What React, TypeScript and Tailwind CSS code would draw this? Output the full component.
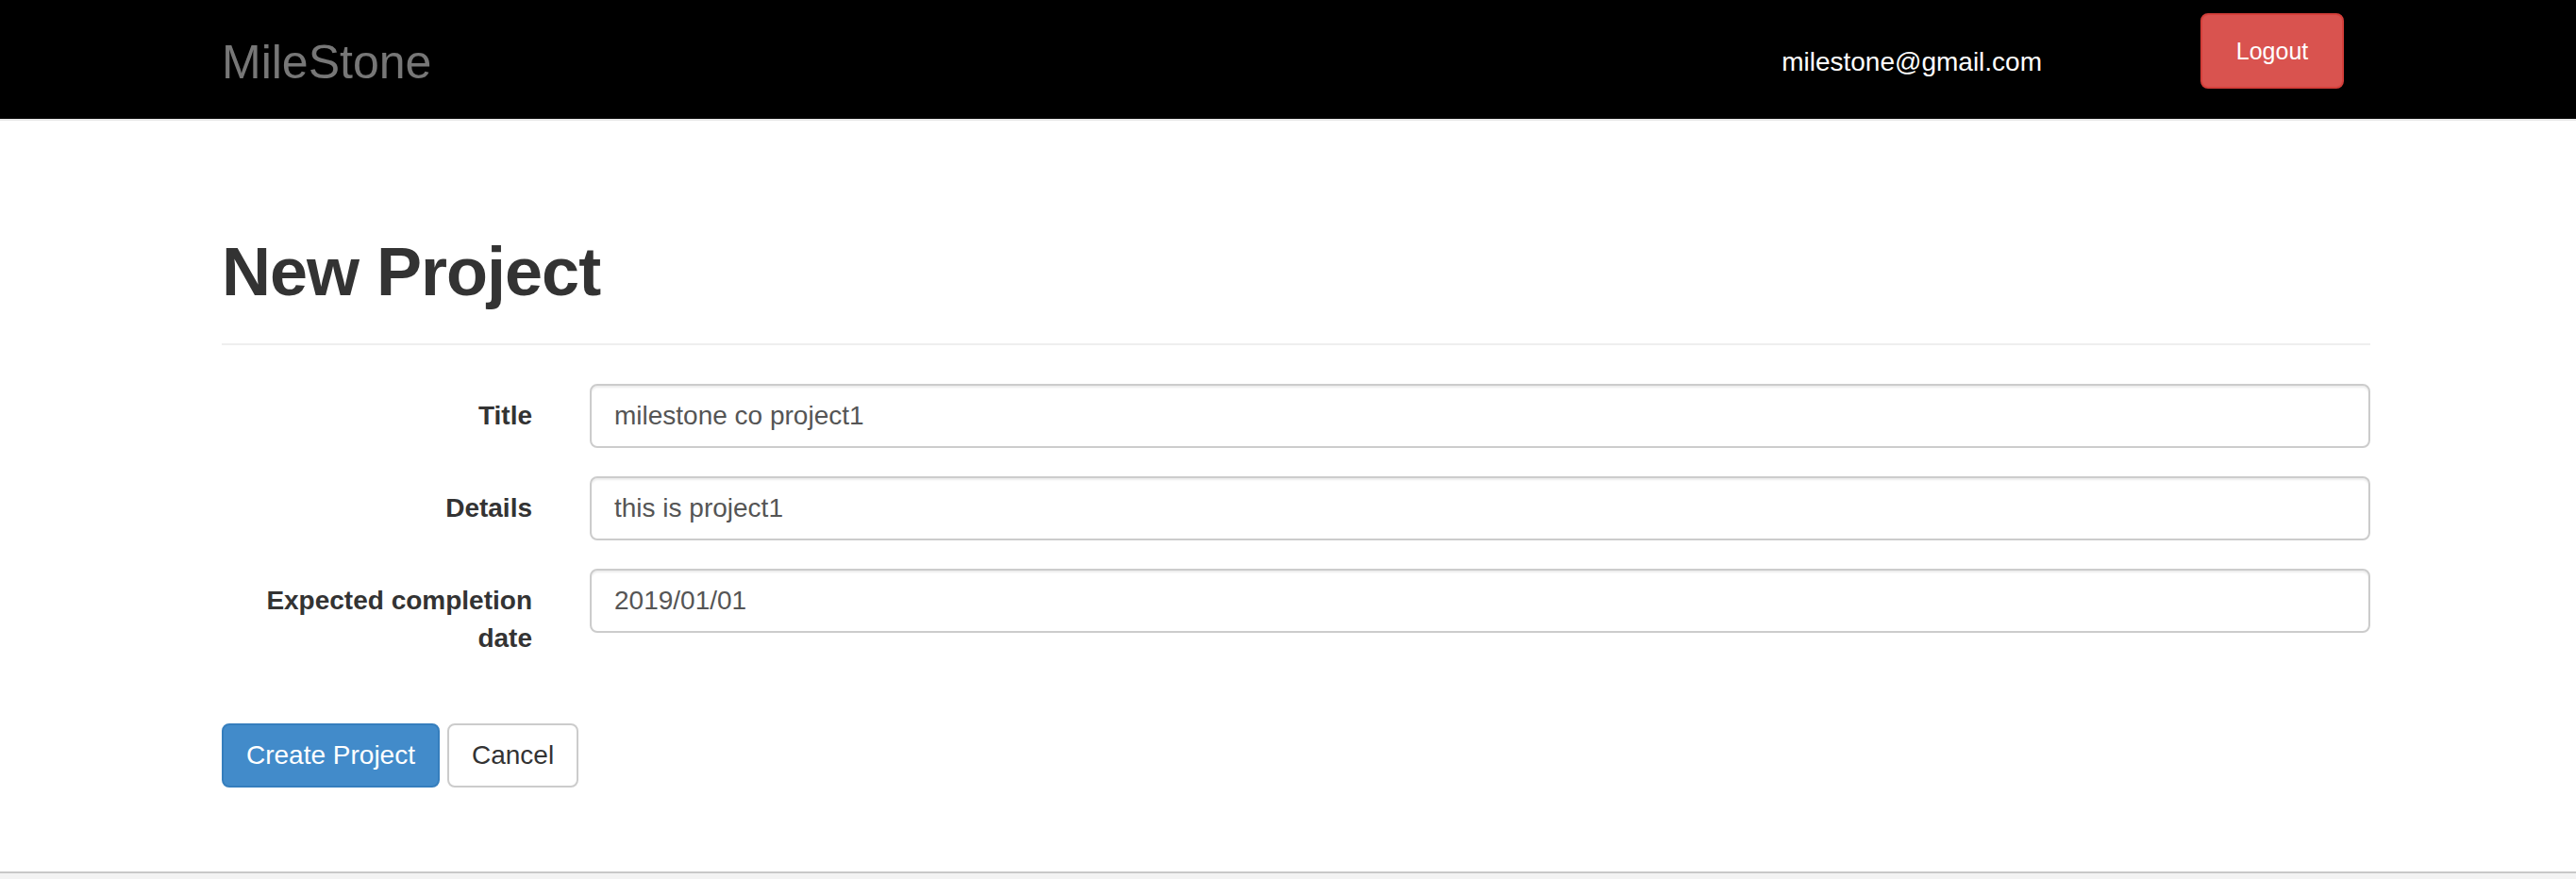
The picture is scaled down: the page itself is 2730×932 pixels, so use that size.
export default function App() {
  const rows = [
    { label: "Title", value: "milestone co project1" },
    { label: "Details", value: "this is project1" },
    { label: "Expected completion date", value: "2019/01/01" },
  ];

  return (
    <div className="h-[932px] flex flex-col bg-white font-['Liberation_Sans',Arial,sans-serif]">
      <nav className="h-[128px] shrink-0 bg-black border-b-2 border-[#e7e7e7] flex items-start pl-[235px] pr-[246px]">
        <a className="mt-[41px] text-[50px] leading-[50px] text-[#777]">MileStone</a>
        <span className="ml-auto mt-[46px] text-[28px] leading-[40px] text-white">milestone@gmail.com</span>
        <button className="ml-[168px] mt-[14px] w-[152px] h-[80px] flex items-center justify-center rounded-[8px] bg-[#d9534f] border-2 border-[#d43f3a] text-white text-[25px] leading-[36px]">
          Logout
        </button>
      </nav>

      <main className="flex-1 pl-[235px]">
        <div className="w-[2277px]">
          <div className="mt-[121px] pb-[36px] border-b-2 border-[#eee]">
            <h1 className="text-[72px] leading-[1.1] font-bold text-[#333] tracking-[-1px]">New Project</h1>
          </div>

          <form className="mt-[41px]">
            {rows.map((r) => (
              <div key={r.label} className="flex items-start mb-[30px]">
                <label className="w-[329px] shrink-0 pt-[14px] text-right text-[28px] leading-[40px] font-bold text-[#333]">
                  {r.label}
                </label>
                <input
                  defaultValue={r.value}
                  className="ml-[61px] w-[1887px] h-[68px] px-[24px] rounded-[8px] border-2 border-[#ccc] shadow-[inset_0_2px_2px_rgba(0,0,0,0.075)] text-[28px] text-[#555] outline-none"
                />
              </div>
            ))}

            <div className="flex gap-[8px] mt-[70px]">
              <button type="button" className="h-[68px] px-[24px] rounded-[8px] bg-[#428bca] border-2 border-[#357ebd] text-white text-[28px]">
                Create Project
              </button>
              <button type="button" className="h-[68px] px-[24px] rounded-[8px] bg-white border-2 border-[#ccc] text-[#333] text-[28px]">
                Cancel
              </button>
            </div>
          </form>
        </div>
      </main>

      <footer className="h-[8px] shrink-0 border-t-2 border-[#c8c8c8] bg-[#f3f3f3]" />
    </div>
  );
}
